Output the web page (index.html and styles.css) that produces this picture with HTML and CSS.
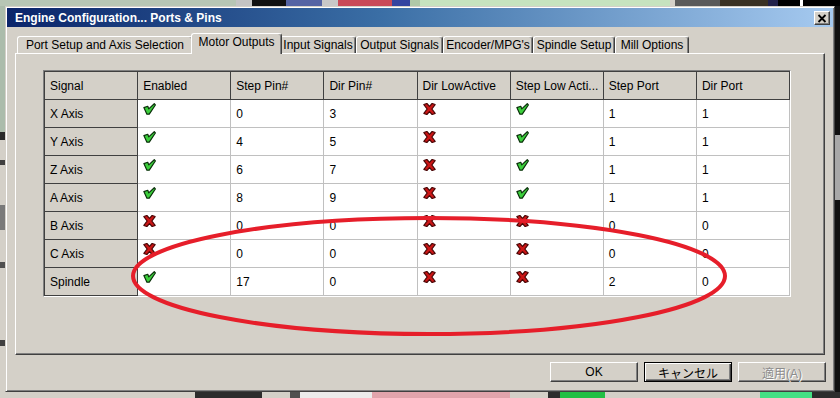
FILE: index.html
```html
<!DOCTYPE html>
<html>

	<head>
		<meta charset="UTF-8">
		<title>Engine Configuration... Ports &amp; Pins</title>
		<link rel="stylesheet" href="styles.css">
	</head>

	<body>
		<svg class="defs" width="0" height="0">
			<symbol id="chk" viewBox="0 0 12 11">
				<path d="M0.8 4.2 L4.4 3 L5.3 5.4 L10.4 0.6 L11.4 1.8 L5.8 10.3 L3.6 10.3 Z" fill="#3ccf3c" stroke="#0a300a" stroke-width="1.1" stroke-linejoin="round" />
			</symbol>
			<symbol id="crs" viewBox="0 0 12 11">
				<path d="M0.8 1.4 L3.6 0.4 L6 3 L8.4 0.4 L11.2 1.4 L8.2 5.5 L11.2 9.6 L8.4 10.6 L6 8 L3.6 10.6 L0.8 9.6 L3.8 5.5 Z" fill="#cc1616" stroke="#480606" stroke-width="1.1" stroke-linejoin="round" />
			</symbol>
		</svg>

		<div class="desktop">
			<div class="dialog">
				<div class="titlebar">
					<span class="title">Engine Configuration... Ports &amp; Pins</span>
					<span class="close">
						<svg width="10" height="9" viewBox="0 0 10 9"><path d="M1.5 1 L8.5 8 M8.5 1 L1.5 8" stroke="#000" stroke-width="1.8" /></svg>
					</span>
				</div>

				<div class="tabs">
					<div class="tab">Port Setup and Axis Selection</div>
					<div class="tab active">Motor Outputs</div>
					<div class="tab">Input Signals</div>
					<div class="tab">Output Signals</div>
					<div class="tab">Encoder/MPG's</div>
					<div class="tab">Spindle Setup</div>
					<div class="tab">Mill Options</div>
				</div>

				<div class="panel">
					<div class="gridbox">
						<table class="grid">
							<tr>
								<th>Signal</th>
								<th>Enabled</th>
								<th>Step Pin#</th>
								<th>Dir Pin#</th>
								<th>Dir LowActive</th>
								<th>Step Low Acti...</th>
								<th>Step Port</th>
								<th>Dir Port</th>
							</tr>
							<tr>
								<th>X Axis</th>
								<td class="ic"><svg><use href="#chk" /></svg></td>
								<td>0</td>
								<td>3</td>
								<td class="ic"><svg><use href="#crs" /></svg></td>
								<td class="ic"><svg><use href="#chk" /></svg></td>
								<td>1</td>
								<td>1</td>
							</tr>
							<tr>
								<th>Y Axis</th>
								<td class="ic"><svg><use href="#chk" /></svg></td>
								<td>4</td>
								<td>5</td>
								<td class="ic"><svg><use href="#crs" /></svg></td>
								<td class="ic"><svg><use href="#chk" /></svg></td>
								<td>1</td>
								<td>1</td>
							</tr>
							<tr>
								<th>Z Axis</th>
								<td class="ic"><svg><use href="#chk" /></svg></td>
								<td>6</td>
								<td>7</td>
								<td class="ic"><svg><use href="#crs" /></svg></td>
								<td class="ic"><svg><use href="#chk" /></svg></td>
								<td>1</td>
								<td>1</td>
							</tr>
							<tr>
								<th>A Axis</th>
								<td class="ic"><svg><use href="#chk" /></svg></td>
								<td>8</td>
								<td>9</td>
								<td class="ic"><svg><use href="#crs" /></svg></td>
								<td class="ic"><svg><use href="#chk" /></svg></td>
								<td>1</td>
								<td>1</td>
							</tr>
							<tr>
								<th>B Axis</th>
								<td class="ic"><svg><use href="#crs" /></svg></td>
								<td>0</td>
								<td>0</td>
								<td class="ic"><svg><use href="#crs" /></svg></td>
								<td class="ic"><svg><use href="#crs" /></svg></td>
								<td>0</td>
								<td>0</td>
							</tr>
							<tr>
								<th>C Axis</th>
								<td class="ic"><svg><use href="#crs" /></svg></td>
								<td>0</td>
								<td>0</td>
								<td class="ic"><svg><use href="#crs" /></svg></td>
								<td class="ic"><svg><use href="#crs" /></svg></td>
								<td>0</td>
								<td>0</td>
							</tr>
							<tr>
								<th>Spindle</th>
								<td class="ic"><svg><use href="#chk" /></svg></td>
								<td>17</td>
								<td>0</td>
								<td class="ic"><svg><use href="#crs" /></svg></td>
								<td class="ic"><svg><use href="#crs" /></svg></td>
								<td>2</td>
								<td>0</td>
							</tr>
						</table>
					</div>
				</div>

				<div class="buttons">
					<button class="btn">OK</button>
					<button class="btn default">キャンセル</button>
					<button class="btn" disabled>適用(A)</button>
				</div>
			</div>

			<!-- 手描きの赤い丸 -->
			<svg class="mark" width="840" height="398" viewBox="0 0 840 398">
				<ellipse cx="429" cy="276" rx="296" ry="58" fill="none" stroke="#e61e2a" stroke-width="4" />
			</svg>
		</div>
	</body>

</html>
```

FILE: styles.css
```css
body {
	margin: 0;
}

.defs {
	position: absolute;
}

.desktop {
	position: relative;
	width: 840px;
	height: 398px;
	overflow: hidden;
	box-sizing: border-box;
	padding: 6px 0 0 5px;
	background:
		linear-gradient(to right, #b7c6b5 0 236px, #c4c4c4 236px 252px, #111 252px 286px, #5564a4 286px 322px, #c8c8c8 322px 338px, #c94a58 338px 392px, #3344a0 392px 410px, #b0c8a8 410px 420px, #c6e3bf 420px 670px, #d4d0c8 670px 675px, #5a5a5a 675px 720px, #3a3224 720px 768px, #22224a 768px 778px, #000 778px 800px, #fff 800px 803px, #000 803px) top left / 840px 6px no-repeat,
		linear-gradient(to right, #d4d0c8 0 195px, #2c2c2c 195px 262px, #d4d0c8 262px 290px, #505050 290px 300px, #ececec 300px 372px, #e2a4ac 372px 510px, #d4d0c8 510px 548px, #2c2c2c 548px 560px, #22c044 560px 605px, #d4d0c8 605px 760px, #44e084 760px 812px, #2c2c2c 812px) bottom left / 840px 6px no-repeat,
		linear-gradient(to bottom, #abbcab 0 132px, #2a2a2a 132px 140px, #d4d0c8 140px 160px, #404040 160px 165px, #d4d0c8 165px 205px, #7a7a7a 205px 230px, #d4d0c8 230px 262px, #505050 262px 268px, #d4d0c8 268px 340px, #404040 340px 346px, #d4d0c8 346px) top left / 5px 398px no-repeat,
		linear-gradient(to bottom, #111 0 135px, #a8a8a8 135px 200px, #111 200px) top right / 5px 398px no-repeat,
		#d4d0c8;
}

.dialog {
	width: 830px;
	height: 386px;
	box-sizing: border-box;
	padding: 1px;
	background: #d4d0c8;
	border: 1px solid;
	border-color: #d4d0c8 #404040 #404040 #d4d0c8;
	box-shadow: inset 1px 1px #fff, inset -1px -1px #808080;
	font-family: "Liberation Sans", "Noto Sans CJK JP", sans-serif;
	font-size: 12px;
	color: #000;
}

.titlebar {
	display: flex;
	align-items: center;
	justify-content: space-between;
	height: 19px;
	padding: 0 3px 0 8px;
	background: linear-gradient(to right, #0a246a, #3a6ea5 45%, #a6caf0);
	color: #fff;
	font-weight: bold;
	font-size: 12px;
}

.close {
	display: flex;
	align-items: center;
	justify-content: center;
	width: 16px;
	height: 14px;
	box-sizing: border-box;
	margin-top: 1px;
	background: #d4d0c8;
	border: 1px solid;
	border-color: #fff #404040 #404040 #fff;
	box-shadow: inset -1px -1px #808080;
}

.tabs {
	display: flex;
	align-items: flex-end;
	height: 20px;
	margin: 6px 0 0 10px;
}

.tab {
	position: relative;
	height: 17px;
	box-sizing: border-box;
	border: 1px solid;
	border-bottom: 0;
	border-color: #fff #404040 #fff #fff;
	border-radius: 3px 3px 0 0;
	box-shadow: inset -1px 0 #808080;
	text-align: center;
	line-height: 16px;
	white-space: nowrap;
}

.tab:nth-child(1) { width: 176px; }
.tab:nth-child(2) { width: 91px; }
.tab:nth-child(3) { width: 76px; }
.tab:nth-child(4) { width: 87px; }
.tab:nth-child(5) { width: 90px; }
.tab:nth-child(6) { width: 82px; }
.tab:nth-child(7) { width: 74px; }

.tab.active {
	z-index: 1;
	height: 21px;
	margin: 0 -2px -1px;
	background: #d4d0c8;
	line-height: 17px;
}

.panel {
	width: 810px;
	height: 302px;
	box-sizing: border-box;
	margin-left: 8px;
	padding: 16px 0 0 27px;
	border: 1px solid;
	border-color: #fff #404040 #404040 #fff;
	box-shadow: inset -1px -1px #808080;
}

.gridbox {
	width: 746px;
	border: 1px solid;
	border-color: #808080 #fff #fff #808080;
}

.grid {
	width: 746px;
	table-layout: fixed;
	border-collapse: collapse;
}

.grid tr {
	height: 28px;
}

.grid th,
.grid td {
	padding: 0 5px;
	text-align: left;
	vertical-align: middle;
	white-space: nowrap;
	overflow: hidden;
	font-weight: normal;
	background: #fff;
	border: 1px solid #c0c0c0;
}

.grid th {
	background: #d4d0c8;
	border-color: #404040;
}

.grid td.ic {
	vertical-align: top;
	padding-top: 3px;
}

.grid td.ic svg {
	display: block;
	width: 13px;
	height: 12px;
}

.buttons {
	display: flex;
	justify-content: flex-end;
	gap: 6px;
	margin-top: 7px;
	padding-right: 7px;
}

.btn {
	width: 88px;
	height: 20px;
	padding: 0;
	background: #d4d0c8;
	border: 1px solid;
	border-color: #fff #404040 #404040 #fff;
	box-shadow: inset -1px -1px #808080;
	font-family: "Liberation Sans", "Noto Sans CJK JP", sans-serif;
	font-size: 12px;
	color: #000;
}

.btn.default {
	border-color: #000;
	box-shadow: inset 1px 1px #fff, inset -1px -1px #404040, inset -2px -2px #808080;
}

.btn:disabled {
	color: #8c8c8c;
	text-shadow: 1px 1px #fff;
}

.mark {
	position: absolute;
	left: 0;
	top: 0;
	pointer-events: none;
}
```
